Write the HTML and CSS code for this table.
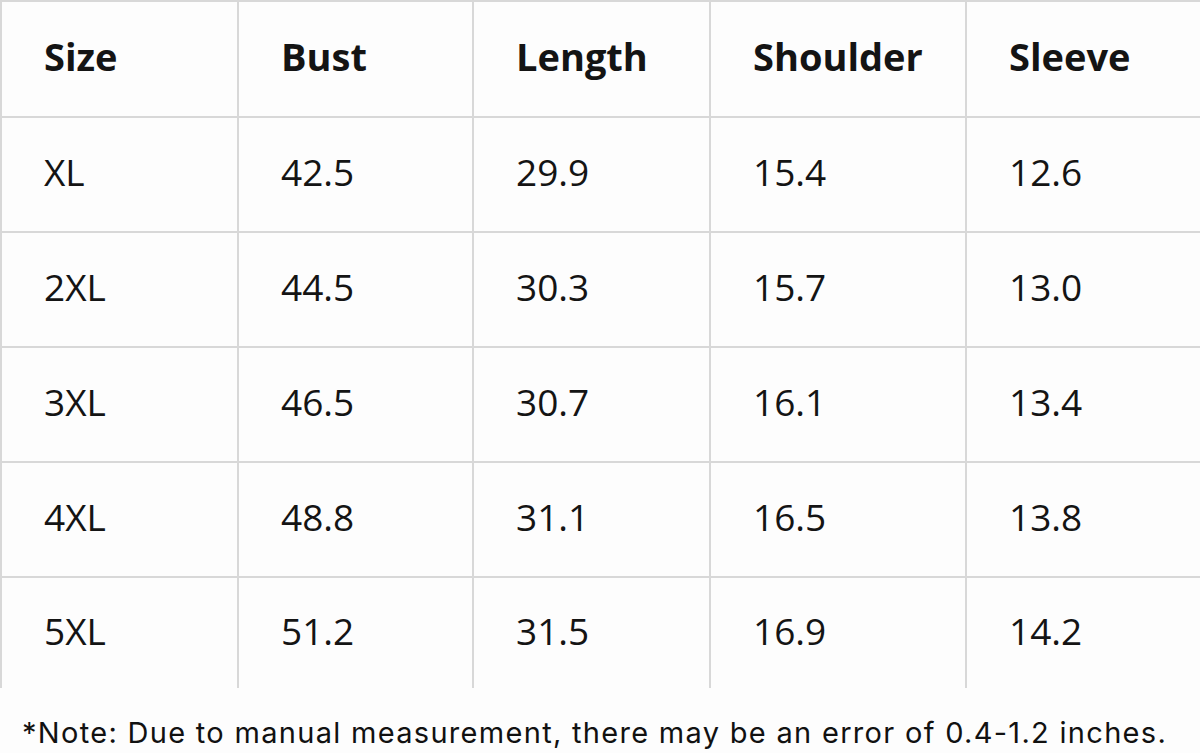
FILE: index.html
```html
<!DOCTYPE html>
<html>
<head>
<meta charset="utf-8">
<link rel="stylesheet" href="styles.css">
</head>
<body>
<div class="page">
  <div class="table">
    <div class="cell head">Size</div><div class="cell head">Bust</div><div class="cell head">Length</div><div class="cell head">Shoulder</div><div class="cell head">Sleeve</div>
    <div class="cell">XL</div><div class="cell">42.5</div><div class="cell">29.9</div><div class="cell">15.4</div><div class="cell">12.6</div>
    <div class="cell">2XL</div><div class="cell">44.5</div><div class="cell">30.3</div><div class="cell">15.7</div><div class="cell">13.0</div>
    <div class="cell">3XL</div><div class="cell">46.5</div><div class="cell">30.7</div><div class="cell">16.1</div><div class="cell">13.4</div>
    <div class="cell">4XL</div><div class="cell">48.8</div><div class="cell">31.1</div><div class="cell">16.5</div><div class="cell">13.8</div>
    <div class="cell">5XL</div><div class="cell">51.2</div><div class="cell">31.5</div><div class="cell">16.9</div><div class="cell">14.2</div>
  </div>
  <p class="note">*Note: Due to manual measurement, there may be an error of 0.4-1.2 inches.</p>
</div>
</body>
</html>
```
FILE: styles.css
```css
html, body {
  margin: 0;
  padding: 0;
  background: #ffffff;
}
.page {
  width: 1200px;
  height: 753px;
  overflow: hidden;
  background: #fdfdfd;
}
.table {
  display: grid;
  grid-template-columns: 237px 235px 237px 256px 235px;
  grid-template-rows: 116px 115px 115px 115px 115px 112px;
}
.cell {
  box-sizing: border-box;
  border-top: 2px solid #d8d8d8;
  border-left: 2px solid #d8d8d8;
  display: flex;
  align-items: center;
  padding-left: 42px;
  padding-bottom: 6px;
  font-family: "Open Sans", sans-serif;
  font-size: 37px;
  color: #141414;
}
.head {
  font-weight: 700;
  font-size: 38px;
}
.note {
  margin: 0;
  padding: 27px 0 0 22px;
  font-family: "Inter", sans-serif;
  font-size: 29px;
  letter-spacing: 1.3px;
  color: #111;
  white-space: nowrap;
}
```
